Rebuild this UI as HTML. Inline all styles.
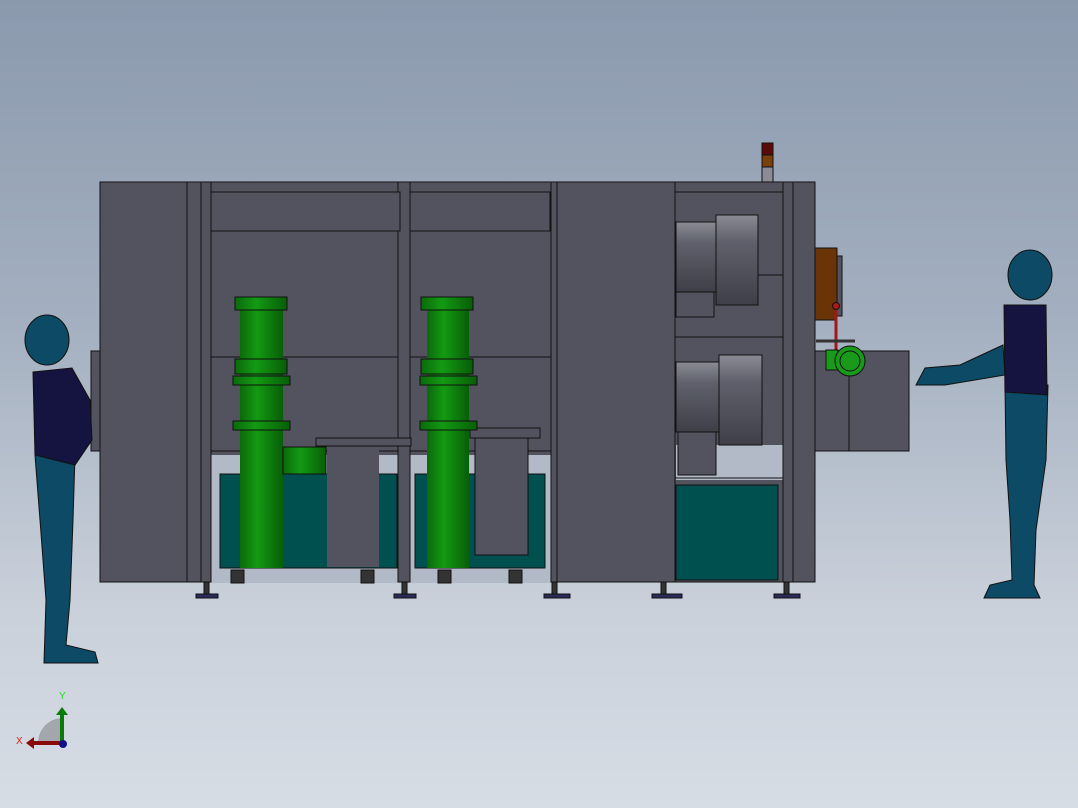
<!DOCTYPE html>
<html><head><meta charset="utf-8"><style>
html,body{margin:0;padding:0;width:1078px;height:808px;overflow:hidden}
body{background:linear-gradient(#8b99ae 0%,#a4b0c0 40%,#c9d0da 75%,#d7dde5 100%)}
svg{position:absolute;left:0;top:0}
</style></head><body>
<svg width="1078" height="808" viewBox="0 0 1078 808" xmlns="http://www.w3.org/2000/svg">
<defs>
<linearGradient id="gr" x1="0" x2="1"><stop offset="0" stop-color="#0a6a0a"/><stop offset=".4" stop-color="#139a13"/><stop offset="1" stop-color="#075e07"/></linearGradient>
<linearGradient id="mot" x1="0" y1="0" x2="0" y2="1"><stop offset="0" stop-color="#8a8b95"/><stop offset=".3" stop-color="#5f606b"/><stop offset="1" stop-color="#3e3f48"/></linearGradient>
</defs>
<g stroke="#111" stroke-width="1">
<rect x="91" y="351" width="10" height="100" fill="#52535e"/>
<rect x="100" y="182" width="715" height="400" fill="#52535e"/>
<rect x="211" y="455" width="187" height="128" fill="#b2bac7" stroke="none"/>
<rect x="410" y="455" width="141" height="128" fill="#b2bac7" stroke="none"/>
<rect x="676" y="445" width="107" height="35" fill="#b2bac7" stroke="none"/>
<rect x="187" y="182" width="14" height="400" fill="#52535e"/>
<rect x="201" y="182" width="10" height="400" fill="#52535e"/>
<rect x="398" y="182" width="12" height="400" fill="#52535e"/>
<rect x="551" y="182" width="6" height="400" fill="#52535e"/>
<rect x="211" y="192" width="189" height="39" fill="#52535e"/>
<rect x="410" y="192" width="140" height="39" fill="#52535e"/>
<line x1="211" y1="357" x2="398" y2="357"/><line x1="410" y1="357" x2="551" y2="357"/>
<line x1="211" y1="451" x2="398" y2="451"/><line x1="410" y1="451" x2="551" y2="451"/>
<rect x="220" y="474" width="177" height="94" fill="#00504f"/>
<rect x="415" y="474" width="130" height="94" fill="#00504f"/>
<rect x="327" y="450" width="52" height="117" fill="#52535e" stroke="none"/>
<rect x="475" y="437" width="53" height="118" fill="#52535e"/>
<rect x="316" y="438" width="95" height="8" fill="#52535e"/>
<rect x="470" y="428" width="70" height="10" fill="#52535e"/>
<rect x="240" y="300" width="43" height="268" fill="url(#gr)" stroke="none"/>
<rect x="235" y="297" width="52" height="13" fill="url(#gr)"/>
<rect x="235" y="359" width="52" height="15" fill="url(#gr)"/>
<rect x="233" y="376" width="57" height="9" fill="url(#gr)"/>
<rect x="233" y="421" width="57" height="9" fill="url(#gr)"/>
<rect x="283" y="447" width="43" height="27" fill="url(#gr)"/>
<rect x="427" y="300" width="42" height="268" fill="url(#gr)" stroke="none"/>
<rect x="421" y="297" width="52" height="13" fill="url(#gr)"/>
<rect x="421" y="359" width="52" height="15" fill="url(#gr)"/>
<rect x="420" y="376" width="57" height="9" fill="url(#gr)"/>
<rect x="420" y="421" width="57" height="9" fill="url(#gr)"/>
<rect x="557" y="182" width="118" height="400" fill="#52535e"/>
<rect x="675" y="192" width="108" height="83" fill="#52535e"/>
<rect x="676" y="222" width="40" height="70" fill="url(#mot)"/>
<rect x="716" y="215" width="42" height="90" fill="url(#mot)"/>
<rect x="676" y="292" width="38" height="25" fill="#52535e"/>
<line x1="675" y1="337" x2="783" y2="337"/>
<rect x="676" y="362" width="43" height="70" fill="url(#mot)"/>
<rect x="719" y="355" width="43" height="90" fill="url(#mot)"/>
<rect x="678" y="432" width="38" height="43" fill="#52535e"/>
<line x1="675" y1="478" x2="783" y2="478"/>
<rect x="676" y="485" width="102" height="95" fill="#00504f"/>
<rect x="783" y="182" width="10" height="400" fill="#52535e"/>
<rect x="793" y="182" width="22" height="400" fill="#52535e"/>
<rect x="815" y="351" width="94" height="100" fill="#52535e"/>
<line x1="849" y1="351" x2="849" y2="451"/>
<rect x="815" y="248" width="22" height="72" fill="#6a3407"/>
<rect x="837" y="256" width="5" height="60" fill="#52535e"/>
<line x1="836" y1="306" x2="836" y2="350" stroke="#a01818" stroke-width="3"/>
<circle cx="836" cy="306" r="3.5" fill="#b01818"/>
<line x1="816" y1="341" x2="855" y2="341" stroke="#333" stroke-width="3"/>
<rect x="826" y="350" width="12" height="20" fill="#1a9a1a"/>
<circle cx="850" cy="361" r="15" fill="#1a9a1a"/>
<circle cx="850" cy="361" r="10" fill="none"/>
<rect x="762" y="143" width="11" height="12" fill="#5a0a0a"/>
<rect x="762" y="155" width="11" height="12" fill="#7a3f0a"/>
<rect x="762" y="167" width="11" height="15" fill="#8a8c96"/>
<g fill="#2a2a5a">
<rect x="196" y="594" width="22" height="4"/><rect x="394" y="594" width="22" height="4"/>
<rect x="544" y="594" width="26" height="4"/><rect x="652" y="594" width="30" height="4"/>
<rect x="774" y="594" width="26" height="4"/>
</g>
<g fill="#333"><rect x="204" y="582" width="5" height="12"/><rect x="402" y="582" width="5" height="12"/><rect x="552" y="582" width="5" height="12"/><rect x="661" y="582" width="5" height="12"/><rect x="784" y="582" width="5" height="12"/>
<rect x="231" y="570" width="13" height="13"/><rect x="361" y="570" width="13" height="13"/><rect x="438" y="570" width="13" height="13"/><rect x="509" y="570" width="13" height="13"/></g>
<g fill="#0d4a66">
<ellipse cx="47" cy="340" rx="22" ry="25"/>
<path d="M35 455 L75 455 L73 520 L70 600 L66 645 L95 652 L98 663 L44 663 L46 600 L40 520 Z"/>
</g>
<path d="M33 372 L72 368 L90 400 L92 440 L75 465 L35 455 Z" fill="#15133f"/>
<g fill="#0d4a66">
<ellipse cx="1030" cy="275" rx="22" ry="25"/>
<path d="M1005 385 L1048 385 L1046 460 L1036 530 L1034 585 L1040 598 L984 598 L990 585 L1012 580 L1010 520 L1006 460 Z"/>
<path d="M1003 345 L960 365 L925 368 L916 385 L945 385 L1005 375 Z"/>
</g>
<path d="M1004 305 L1046 305 L1047 395 L1005 392 Z" fill="#15133f"/>
</g>
<path d="M38 743 A25 25 0 0 1 62 718 L62 743 Z" fill="#a3a6ad"/>
<line x1="62" y1="743" x2="62" y2="713" stroke="#0a7a0a" stroke-width="4"/>
<path d="M56 715 L62 707 L68 715 Z" fill="#0a7a0a"/>
<line x1="62" y1="743" x2="32" y2="743" stroke="#8a0a0a" stroke-width="4"/>
<path d="M34 737 L26 743 L34 749 Z" fill="#8a0a0a"/>
<circle cx="63" cy="744" r="4" fill="#10108a"/>
<text x="59" y="699" font-family="Liberation Sans, sans-serif" font-size="10" fill="#20e020">Y</text>
<text x="16" y="744" font-family="Liberation Sans, sans-serif" font-size="10" fill="#e02020">X</text>
</svg>
</body></html>
